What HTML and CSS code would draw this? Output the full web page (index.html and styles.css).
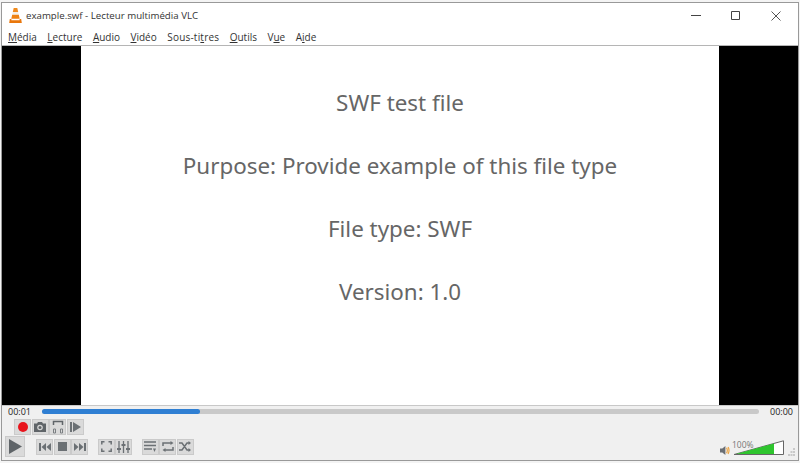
FILE: index.html
```html
<!DOCTYPE html>
<html lang="fr">
<head>
    <meta charset="UTF-8">
    <meta name="viewport" content="width=device-width, initial-scale=1.0">
    <title>Lecteur multimédia VLC</title>
    <link rel="stylesheet" href="styles.css">
</head>
<body>

<div class="window">
    <header class="titlebar">
        <svg class="cone" width="13" height="15" viewBox="0 0 13 15">
            <path d="M4.700 0h3.600l.9 4H3.800z" fill="#f08a1d"/>
            <path d="M3.800 4h5.400l.6 2.800H3.200z" fill="#f4efe6"/>
            <path d="M3.200 6.800h6.600l.9 4H2.300z" fill="#ee8213"/>
            <path d="M.8 11h1.700l-.2 1.200h8.400l-.2-1.200h1.700l.6 4H.2z" fill="#e9770c"/>
        </svg>
        <span class="title">example.swf - Lecteur multimédia VLC</span>
        <div class="window-buttons">
            <svg width="12" height="12" viewBox="0 0 12 12"><path d="M1 5.500h10" stroke="#444" fill="none"/></svg>
            <svg width="12" height="12" viewBox="0 0 12 12"><path d="M1.500 1.500h8v8h-8z" stroke="#444" fill="none"/></svg>
            <svg width="12" height="12" viewBox="0 0 12 12"><path d="M1.500 1.500l9 9M10.500 1.500l-9 9" stroke="#555" fill="none"/></svg>
        </div>
    </header>

    <nav class="menubar">
        <span class="menu-item"><u>M</u>édia</span>
        <span class="menu-item"><u>L</u>ecture</span>
        <span class="menu-item"><u>A</u>udio</span>
        <span class="menu-item"><u>V</u>idéo</span>
        <span class="menu-item menu-wide">Sous-ti<u>t</u>res</span>
        <span class="menu-item"><u>O</u>utils</span>
        <span class="menu-item">V<u>u</u>e</span>
        <span class="menu-item">A<u>i</u>de</span>
    </nav>

    <main class="video">
        <div class="slide">
            <p>SWF test file</p>
            <p>Purpose: Provide example of this file type</p>
            <p>File type: SWF</p>
            <p>Version: 1.0</p>
        </div>
    </main>

    <section class="controls">
        <div class="seek-row">
            <span class="time">00:01</span>
            <div class="seek-track"><div class="seek-fill"></div></div>
            <span class="time">00:00</span>
        </div>
        <div class="button-row advanced">
            <div class="btn"><svg width="12" height="12" viewBox="0 0 12 12"><circle cx="6" cy="6" r="5" fill="#e8141c"/></svg></div>
            <div class="btn"><svg width="14" height="12" viewBox="0 0 14 12"><path d="M1 2.500h3l1-1.500h4l1 1.500h3v8.500H1z" fill="#5f6468"/><circle cx="7" cy="6.500" r="2.800" fill="#d4d4d4"/><circle cx="7" cy="6.500" r="1.500" fill="#5f6468"/></svg></div>
            <div class="btn"><svg width="12" height="14" viewBox="0 0 12 14"><path d="M1.500 5V1.500h9V5" stroke="#5f6468" stroke-width="1.500" fill="none"/><path d="M1.500 9h2v4h-2zM8.500 9h2v4h-2z" fill="none" stroke="#7b7f82"/></svg></div>
            <div class="btn"><svg width="12" height="12" viewBox="0 0 12 12"><path d="M1 1h2v10H1zM4 1l8 5-8 5z" fill="#6b7074"/></svg></div>
        </div>
        <div class="button-row main-row">
            <div class="btn btn-play"><svg width="14" height="15" viewBox="0 0 14 15"><path d="M1 0l13 7.500L1 15z" fill="#5f6468"/></svg></div>
            <div class="group">
                <div class="btn"><svg width="12" height="8" viewBox="0 0 12 8"><path d="M0 0h2v8H0zM7 0v8L2.500 4zM12 0v8L7.500 4z" fill="#6b7074"/></svg></div>
                <div class="btn"><svg width="9" height="9" viewBox="0 0 9 9"><path d="M0 0h9v9H0z" fill="#6b7074"/></svg></div>
                <div class="btn"><svg width="12" height="8" viewBox="0 0 12 8"><path d="M12 0h-2v8h2zM5 0v8l4.500-4zM0 0v8l4.500-4z" fill="#6b7074"/></svg></div>
            </div>
            <div class="group">
                <div class="btn"><svg width="11" height="11" viewBox="0 0 11 11"><path d="M.8 3.500V.8h2.700M7.500.8h2.700v2.700M10.200 7.500v2.700H7.500M3.500 10.200H.8V7.500" stroke="#6b7074" stroke-width="1.500" fill="none"/></svg></div>
                <div class="btn"><svg width="13" height="12" viewBox="0 0 13 12"><path d="M2 0v12M6.500 0v12M11 0v12" stroke="#6b7074" stroke-width="1.300" fill="none"/><path d="M0 7h4v2H0zM4.500 3h4v2h-4zM9 7h4v2H9z" fill="#6b7074"/></svg></div>
            </div>
            <div class="group">
                <div class="btn"><svg width="12" height="11" viewBox="0 0 12 11"><path d="M0 1h12M0 4.500h12M0 8h8" stroke="#6b7074" stroke-width="1.500" fill="none"/><path d="M9 7.500h3L10.500 11z" fill="#6b7074"/></svg></div>
                <div class="btn"><svg width="12" height="11" viewBox="0 0 12 11"><path d="M1 5V2h8M11 6v3H3" stroke="#6b7074" stroke-width="1.500" fill="none"/><path d="M8.500 0l3 2-3 2zM3.500 7l-3 2 3 2z" fill="#6b7074"/></svg></div>
                <div class="btn"><svg width="12" height="11" viewBox="0 0 12 11"><path d="M0 2h3l5 7h2M0 9h3l5-7h2" stroke="#6b7074" stroke-width="1.500" fill="none"/><path d="M9.500 0l2.500 2-2.500 2zM9.500 7l2.500 2-2.500 2z" fill="#6b7074"/></svg></div>
            </div>
            <div class="volume">
                <svg width="10" height="11" viewBox="0 0 13 13"><path d="M0 4h3l4-3.500v12L3 9H0z" fill="#6b6f74"/><path d="M8.500 3q2 3.500 0 7M10.500 2q2.500 4.500 0 9" stroke="#eda23c" stroke-width="1.500" fill="none"/></svg>
                <span class="volume-label">100%</span>
                <svg class="volume-bar" width="52" height="16" viewBox="0 0 52 16">
                    <path d="M1 14.500L50.500 .8v13.700z" fill="#fff" stroke="#666"/>
                    <path d="M3 14L41 3.500V14z" fill="#2ec52e"/>
                </svg>
                <svg class="grip" width="7" height="8" viewBox="0 0 7 8"><path d="M5 0h2v2H5zM2.500 3h2v2h-2zM5 3h2v2H5zM0 6h2v2H0zM2.500 6h2v2h-2zM5 6h2v2H5z" fill="#c9c9c9"/></svg>
            </div>
        </div>
    </section>
</div>

</body>
</html>
```

FILE: styles.css
```css
html, body {
    margin: 0;
    padding: 0;
}

body {
    width: 800px;
    height: 463px;
    overflow: hidden;
    background-color: #f4f4f4;
    font-family: "Open Sans", "Liberation Sans", sans-serif;
}

.window {
    box-sizing: border-box;
    height: 459px;
    margin: 2px 1px 0 1px;
    border: 1px solid #999;
    display: flex;
    flex-direction: column;
    background-color: #fff;
}

.titlebar {
    height: 25px;
    display: flex;
    align-items: center;
    padding-left: 7px;
    color: #333;
    font-size: 9.7px;
}

.title {
    margin-left: 4px;
}

.window-buttons {
    margin-left: auto;
    margin-right: 16px;
    display: flex;
    gap: 28px;
    align-items: center;
}

.menubar {
    height: 16px;
    display: flex;
    gap: 10.500px;
    padding: 1px 0 0 6px;
    font-size: 10px;
    line-height: 17px;
    color: #333;
    border-bottom: 1px solid #b5b5b5;
}

.menu-wide {
    letter-spacing: 0.200px;
}

.video {
    height: 359px;
    background-color: #000;
    display: flex;
    justify-content: center;
}

.slide {
    width: 638px;
    background-color: #fff;
    color: #666;
    font-size: 22.400px;
    text-align: center;
    font-family: "Noto Sans", "Open Sans", sans-serif;
    padding-top: 40px;
    box-sizing: border-box;
}

.slide p {
    margin: 0 0 29px 0;
    line-height: 34px;
}

.controls {
    flex: 1;
    background-color: #f0f0f0;
    padding: 0 3px 0 3px;
    border-top: 1px solid #c8c8c8;
}

.seek-row {
    height: 11px;
    display: flex;
    align-items: center;
    gap: 11px;
    padding-left: 3px;
    padding-right: 2px;
}

.time {
    font-size: 9px;
    color: #222;
}

.seek-track {
    flex: 1;
    height: 5px;
    border-radius: 3px;
    background-color: #c9c9c9;
}

.seek-fill {
    width: 22%;
    height: 100%;
    border-radius: 3px;
    background-color: #2f7fd3;
}

.button-row {
    display: flex;
    align-items: center;
}

.advanced {
    margin-top: 2px;
    padding-left: 9px;
    gap: 0.500px;
}

.main-row {
    margin-top: 1px;
}

.btn {
    width: 17px;
    height: 16px;
    display: flex;
    align-items: center;
    justify-content: center;
    background-color: #dadada;
    border: 1px solid #cacaca;
    box-sizing: border-box;
}

.btn-play {
    width: 20px;
    height: 21px;
    margin-right: 11px;
}

.group {
    display: flex;
    gap: 0.500px;
    margin-right: 9.500px;
}

.volume {
    margin-left: auto;
    position: relative;
    align-self: stretch;
    display: flex;
    align-items: flex-end;
    gap: 3px;
    padding-bottom: 1px;
}

.volume-label {
    position: absolute;
    left: 12px;
    top: 3px;
    font-size: 8.500px;
    color: #777;
}
```
